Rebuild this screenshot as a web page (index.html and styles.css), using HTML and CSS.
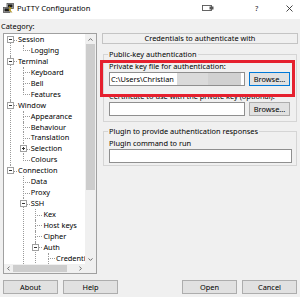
FILE: index.html
```html
<!DOCTYPE html>
<html lang="en">
<head>
    <meta charset="UTF-8">
    <meta name="viewport" content="width=device-width, initial-scale=1.0">
    <title>PuTTY Configuration</title>
    <link rel="stylesheet" href="styles.css">
</head>
<body>
    <!-- Title bar -->
    <div class="titlebar">
        <svg class="app-icon" viewBox="0 0 11 11">
            <rect x="4" y="0.5" width="6.5" height="5" fill="#bdbdbd" stroke="#555" stroke-width="0.8"/>
            <rect x="5" y="1.4" width="4.5" height="3" fill="#1a1a1a"/>
            <rect x="0.5" y="4.5" width="6.5" height="5" fill="#bdbdbd" stroke="#555" stroke-width="0.8"/>
            <rect x="1.5" y="5.4" width="4.5" height="3" fill="#1a1a1a"/>
            <path d="M6 3 L8.5 5.5 L6.5 6 L9 9.5 L5.5 6.8 L7.3 6.3 Z" fill="#ffd400" stroke="#8a6d00" stroke-width="0.4"/>
        </svg>
        <span class="title">PuTTY Configuration</span>
        <svg class="snap-icon" viewBox="0 0 12 6">
            <rect x="0.5" y="0.5" width="9" height="5" fill="none" stroke="#555" stroke-width="0.9"/>
            <rect x="7.5" y="1.5" width="4" height="3" fill="#555"/>
        </svg>
        <span class="help-mark">?</span>
        <svg class="close-icon" viewBox="0 0 7 7">
            <path d="M0.5 0.5 L6.5 6.5 M6.5 0.5 L0.5 6.5" stroke="#333" stroke-width="0.9"/>
        </svg>
    </div>

    <div class="content">
        <!-- Category tree -->
        <div class="left">
            <div class="cat-label">Category:</div>
            <div class="tree">
                <div class="tree-rows">
                    <ul class="tree-root">
                        <li><div class="node"><span class="exp"></span>Session</div>
                            <ul>
                                <li><div class="node">Logging</div></li>
                            </ul>
                        </li>
                        <li><div class="node"><span class="exp"></span>Terminal</div>
                            <ul>
                                <li><div class="node">Keyboard</div></li>
                                <li><div class="node">Bell</div></li>
                                <li><div class="node">Features</div></li>
                            </ul>
                        </li>
                        <li><div class="node"><span class="exp"></span>Window</div>
                            <ul>
                                <li><div class="node">Appearance</div></li>
                                <li><div class="node">Behaviour</div></li>
                                <li><div class="node">Translation</div></li>
                                <li><div class="node"><span class="exp plus"></span>Selection</div></li>
                                <li><div class="node">Colours</div></li>
                            </ul>
                        </li>
                        <li><div class="node"><span class="exp"></span>Connection</div>
                            <ul>
                                <li><div class="node">Data</div></li>
                                <li><div class="node">Proxy</div></li>
                                <li><div class="node"><span class="exp"></span>SSH</div>
                                    <ul>
                                        <li><div class="node">Kex</div></li>
                                        <li><div class="node">Host keys</div></li>
                                        <li><div class="node">Cipher</div></li>
                                        <li><div class="node"><span class="exp"></span>Auth</div>
                                            <ul>
                                                <li><div class="node">Credenti</div></li>
                                                <li><div class="node"></div></li>
                                            </ul>
                                        </li>
                                        <li><div class="node"></div></li>
                                    </ul>
                                </li>
                                <li><div class="node"></div></li>
                            </ul>
                        </li>
                    </ul>
                </div>
                <div class="vscroll">
                    <div class="arrow">
                        <svg viewBox="0 0 5 3"><path d="M0.5 2.6 L2.5 0.6 L4.5 2.6" fill="none" stroke="#606060" stroke-width="0.9"/></svg>
                    </div>
                    <div class="vthumb"></div>
                    <div class="spacer"></div>
                    <div class="arrow">
                        <svg viewBox="0 0 5 3"><path d="M0.5 0.4 L2.5 2.4 L4.5 0.4" fill="none" stroke="#606060" stroke-width="0.9"/></svg>
                    </div>
                </div>
                <div class="hscroll">
                    <div class="arrow left-arrow">
                        <svg viewBox="0 0 3 5"><path d="M2.6 0.5 L0.6 2.5 L2.6 4.5" fill="none" stroke="#606060" stroke-width="0.9"/></svg>
                    </div>
                    <div class="hthumb"></div>
                    <div class="spacer"></div>
                    <div class="arrow right-arrow">
                        <svg viewBox="0 0 3 5"><path d="M0.4 0.5 L2.4 2.5 L0.4 4.5" fill="none" stroke="#606060" stroke-width="0.9"/></svg>
                    </div>
                </div>
                <div class="corner"></div>
            </div>
        </div>

        <!-- Settings panel -->
        <div class="right">
            <div class="header-box">Credentials to authenticate with</div>

            <fieldset class="group">
                <legend>Public-key authentication</legend>
                <div class="field-label">Private key file for authentication:</div>
                <div class="field-row">
                    <div class="edit">C:\Users\Christian<span class="redact-a"></span><span class="redact-b"></span></div>
                    <div class="btn browse default">Browse...</div>
                </div>
                <div class="field-label cert">Certificate to use with the private key (optional):</div>
                <div class="field-row">
                    <div class="edit"></div>
                    <div class="btn browse">Browse...</div>
                </div>
            </fieldset>

            <fieldset class="group plugin">
                <legend>Plugin to provide authentication responses</legend>
                <div class="field-label">Plugin command to run</div>
                <div class="field-row">
                    <div class="edit"></div>
                </div>
            </fieldset>

            <div class="annotation"></div>
        </div>
    </div>

    <!-- Buttons -->
    <div class="footer">
        <div class="btn-group">
            <div class="btn wide">About</div>
            <div class="btn wide">Help</div>
        </div>
        <div class="btn-group">
            <div class="btn wide">Open</div>
            <div class="btn wide">Cancel</div>
        </div>
    </div>
</body>
</html>
```

FILE: styles.css
```css
* {
    box-sizing: border-box;
}
body {
    margin: 0;
    width: 300px;
    height: 297px;
    overflow: hidden;
    background: #f0f0f0;
    font-family: "Noto Sans", sans-serif;
    font-size: 7.4px;
    color: #000;
}

/* title bar */
.titlebar {
    height: 19px;
    background: #fff;
    display: flex;
    align-items: center;
    padding: 0 7px 3px 3px;
}
.app-icon {
    width: 11px;
    height: 11px;
    margin-right: 3px;
}
.title {
    flex: 1;
    font-size: 7.6px;
}
.snap-icon {
    width: 12px;
    height: 6px;
    margin-right: 41px;
}
.help-mark {
    font-size: 7.5px;
    color: #222;
    width: 4px;
    margin-right: 27px;
}
.close-icon {
    width: 7px;
    height: 7px;
}

.content {
    display: flex;
    padding-top: 2px;
}

/* category tree */
.left {
    width: 97px;
}
.cat-label {
    height: 10px;
    line-height: 10px;
    padding-left: 1px;
    margin-bottom: 2px;
}
.tree {
    margin-left: 3px;
    width: 94px;
    height: 241px;
    border: 1px solid #a0a0a0;
    background: #fff;
    display: grid;
    grid-template-columns: 81px 11px;
    grid-template-rows: 230px 9px;
}
.tree-rows {
    overflow: hidden;
}
.tree ul {
    list-style: none;
    margin: 0;
    padding: 0;
}
.tree ul ul {
    margin-left: 12.7px;
}
.tree li {
    position: relative;
}
.tree li::before {
    content: "";
    position: absolute;
    left: 6px;
    top: 0;
    width: 6px;
    height: 5.5px;
    border-left: 1px dotted #9a9a9a;
    border-bottom: 1px dotted #9a9a9a;
}
.tree li:not(:last-child)::after {
    content: "";
    position: absolute;
    left: 6px;
    top: 5.5px;
    bottom: 0;
    border-left: 1px dotted #9a9a9a;
}
.tree-root > li:first-child::before {
    top: 5.5px;
    height: 0;
}
.node {
    position: relative;
    height: 10.95px;
    line-height: 10.95px;
    padding-left: 14px;
    white-space: nowrap;
}
.exp {
    position: absolute;
    left: 3px;
    top: 2px;
    width: 7px;
    height: 7px;
    border: 1px solid #a0a0a0;
    background: #fff;
    z-index: 1;
}
.exp::before {
    content: "";
    position: absolute;
    left: 1px;
    right: 1px;
    top: 2px;
    height: 1px;
    background: #333;
}
.exp.plus::after {
    content: "";
    position: absolute;
    left: 2px;
    top: 1px;
    bottom: 1px;
    width: 1px;
    background: #333;
}

.vscroll {
    background: #f0f0f0;
    display: flex;
    flex-direction: column;
}
.vscroll .arrow {
    height: 10px;
    display: flex;
    align-items: center;
    justify-content: center;
}
.vscroll .arrow svg {
    width: 5px;
    height: 3px;
}
.vthumb {
    height: 146px;
    margin: 0 1px;
    background: #cdcdcd;
}
.spacer {
    flex: 1;
}
.hscroll {
    background: #f0f0f0;
    display: flex;
}
.hscroll .arrow {
    display: flex;
    align-items: center;
    justify-content: center;
}
.hscroll .arrow svg {
    width: 3px;
    height: 5px;
}
.left-arrow {
    width: 9px;
}
.right-arrow {
    width: 10px;
}
.hthumb {
    width: 54px;
    margin: 1px 0;
    background: #cdcdcd;
}
.corner {
    background: #f0f0f0;
}

/* settings panel */
.right {
    position: relative;
    flex: 1;
    margin-left: 5px;
    margin-right: 2px;
    padding-top: 12px;
}
.header-box {
    height: 11px;
    border: 1px solid #c4c4c4;
    text-align: center;
    line-height: 9px;
}
.group {
    margin: 5px 1px 0;
    padding: 0 6px 5px 5px;
    border: 1px solid #d5d5d5;
}
.group.plugin {
    margin-top: 4px;
    padding-right: 4px;
    padding-bottom: 2px;
}
.group legend {
    padding: 0 1px;
    margin-left: -1px;
    line-height: 10px;
}
.field-label {
    line-height: 10px;
    margin-top: 2px;
    white-space: nowrap;
}
.field-label.cert {
    margin-top: 5px;
}
.field-row {
    display: flex;
    gap: 4px;
    margin-top: 1px;
    height: 14px;
}
.edit {
    flex: 1;
    height: 14px;
    border: 1px solid #8f8f8f;
    background: #fff;
    display: flex;
    align-items: center;
    padding-left: 1px;
    line-height: 12px;
    overflow: hidden;
    white-space: nowrap;
}
.redact-a {
    width: 31px;
    height: 12px;
    margin-left: 3px;
    background: #dadada;
}
.redact-b {
    width: 33px;
    height: 12px;
    background: #d1d1d1;
}
.btn {
    height: 14px;
    border: 1px solid #adadad;
    background: #e1e1e1;
    text-align: center;
    line-height: 12px;
}
.btn.browse {
    width: 41px;
}
.btn.default {
    border-color: #0078d7;
}
.annotation {
    position: absolute;
    left: -2px;
    top: 39px;
    width: 195px;
    height: 37px;
    border: 3px solid #e5202e;
}

/* bottom buttons */
.footer {
    display: flex;
    justify-content: space-between;
    padding: 0 3px;
    margin-top: 6px;
}
.btn-group {
    display: flex;
    gap: 5px;
}
.btn.wide {
    width: 55px;
}
```
